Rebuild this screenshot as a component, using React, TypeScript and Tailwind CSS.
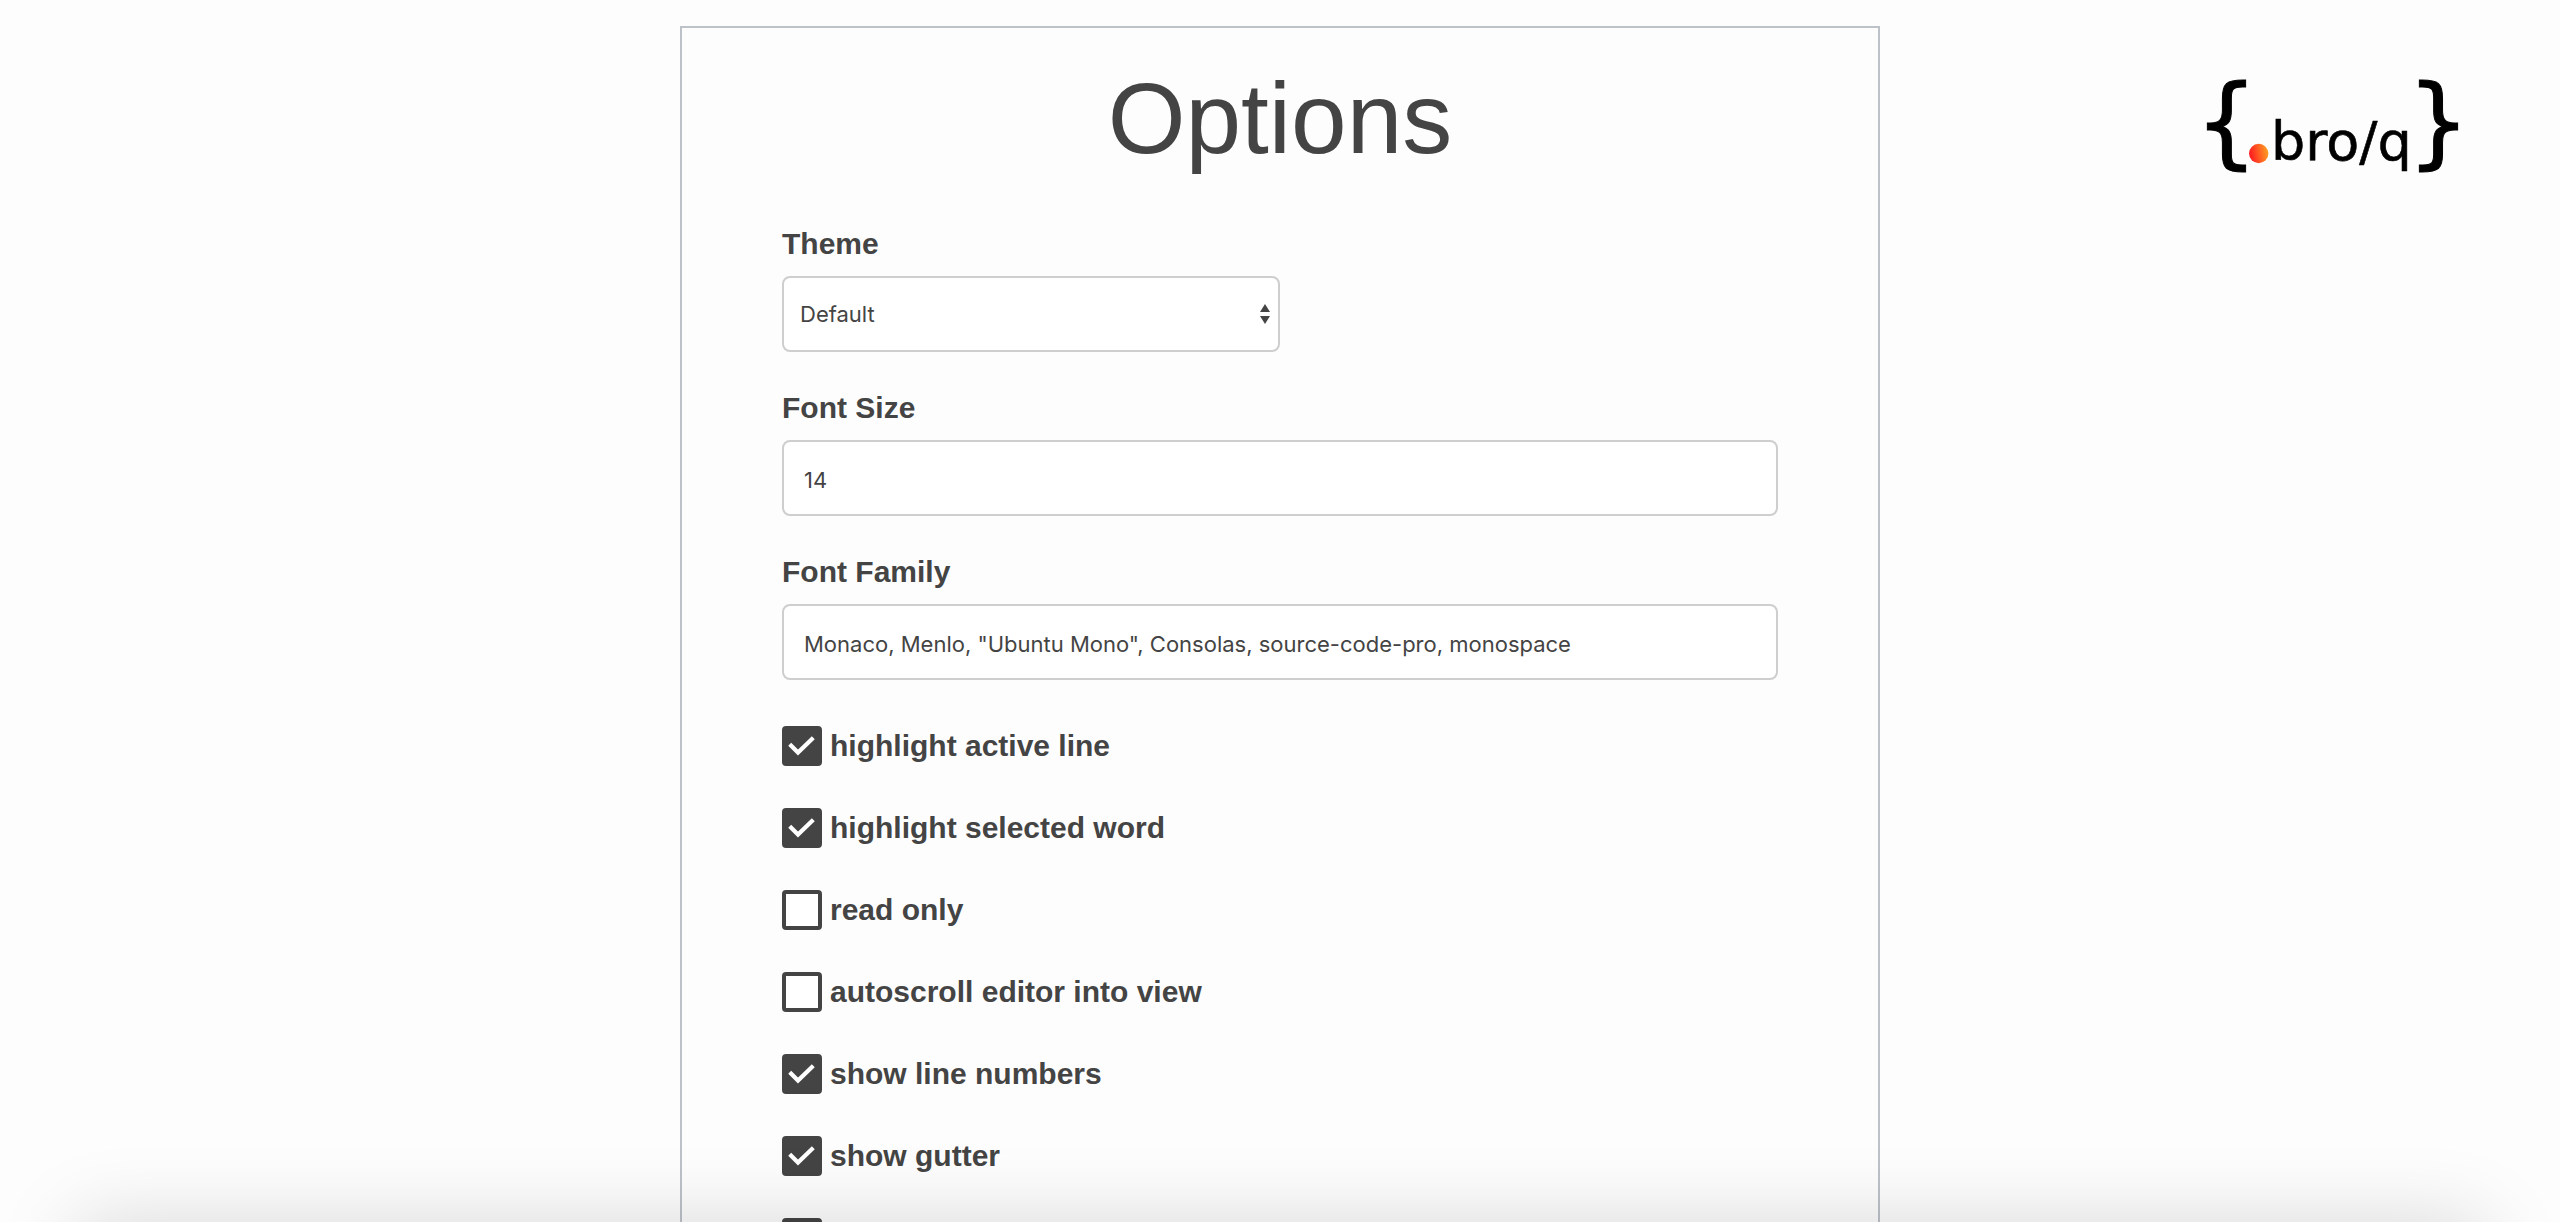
import React from "react";

const checkboxes = [
  { id: "highlight-active-line", label: "highlight active line", checked: true },
  { id: "highlight-selected-word", label: "highlight selected word", checked: true },
  { id: "read-only", label: "read only", checked: false },
  { id: "autoscroll", label: "autoscroll editor into view", checked: false },
  { id: "line-numbers", label: "show line numbers", checked: true },
  { id: "gutter", label: "show gutter", checked: true },
  { id: "next-option", label: "", checked: true },
];

const labelClass =
  "block text-[30px] leading-[48px] font-bold text-[#444444]";
const controlClass =
  "h-[76px] rounded-[8px] border-2 border-[#cecece] bg-white font-['Inter',sans-serif] text-[22px] text-[#444444] outline-none";

function TextField({ id, label, value }: { id: string; label: string; value: string }) {
  return (
    <div>
      <label htmlFor={id} className={labelClass}>{label}</label>
      <input
        id={id}
        type="text"
        defaultValue={value}
        className={`${controlClass} mt-2 block w-full px-5 pt-1`}
      />
    </div>
  );
}

function SelectField() {
  return (
    <div>
      <label htmlFor="theme" className={labelClass}>Theme</label>
      <div className="relative mt-2 w-1/2">
        <select id="theme" className={`${controlClass} block w-full appearance-none pl-4 pr-10`}>
          <option>Default</option>
        </select>
        <svg
          className="pointer-events-none absolute top-7 right-2.5 h-5 w-2.5"
          viewBox="0 0 10 20"
          fill="#444444"
          aria-hidden="true"
        >
          <path d="M5 0L10 8H0ZM0 12H10L5 20Z" />
        </svg>
      </div>
    </div>
  );
}

function CheckField({ id, label, checked }: { id: string; label: string; checked: boolean }) {
  return (
    <div className="flex h-10 items-center gap-2">
      <span className="relative size-10 shrink-0">
        <input
          id={id}
          type="checkbox"
          defaultChecked={checked}
          aria-label={label ? undefined : "option"}
          className="peer block size-10 appearance-none rounded-[4px] border-4 border-[#444444] bg-white checked:bg-[#444444]"
        />
        <svg
          className="pointer-events-none absolute inset-0 hidden size-10 peer-checked:block"
          viewBox="0 0 40 40"
          fill="none"
          stroke="#ffffff"
          strokeWidth="4.2"
          aria-hidden="true"
        >
          <path d="M7.7 18.2L16 26.5L31.3 11.7" />
        </svg>
      </span>
      {label && <label htmlFor={id} className={labelClass}>{label}</label>}
    </div>
  );
}

function Logo() {
  return (
    <svg
      className="h-[150px] w-[300px] blur-[0.6px]"
      viewBox="0 0 300 150"
      role="img"
      aria-label="{.bro/q}"
      fontFamily="'DejaVu Sans', sans-serif"
    >
      <defs>
        <linearGradient id="dot" x1="0" y1="0.6" x2="1" y2="0.4">
          <stop offset="0.1" stopColor="#ff2222" />
          <stop offset="1" stopColor="#ff9f22" />
        </linearGradient>
      </defs>
      <text x="15" y="106" fontSize="99" stroke="#000000" strokeWidth="1">{"{"}</text>
      <circle cx="78.7" cy="103.5" r="9.7" fill="url(#dot)" />
      <text x="91" y="110" fontSize="54" stroke="#000000" strokeWidth="0.6">bro/q</text>
      <text x="227" y="106" fontSize="99" stroke="#000000" strokeWidth="1">{"}"}</text>
    </svg>
  );
}

export default function App() {
  return (
    <div className="relative grid h-screen grid-cols-[1fr_1200px_1fr] overflow-hidden bg-[#fdfdfd] pt-[26px] font-['Liberation_Sans',Arial,sans-serif] text-[#444444]">
      <main className="col-start-2 border-2 border-[#bcc2c8] px-[100px] pt-[30px] pb-10">
        <h1 className="mb-[42px] text-center text-[100px] leading-[120px] font-normal">Options</h1>
        <form>
          <div className="flex flex-col gap-8">
            <SelectField />
            <TextField id="font-size" label="Font Size" value="14" />
            <TextField
              id="font-family"
              label="Font Family"
              value={'Monaco, Menlo, "Ubuntu Mono", Consolas, source-code-pro, monospace'}
            />
          </div>
          <div className="mt-[46px] flex flex-col gap-[42px]">
            {checkboxes.map((box) => (
              <CheckField key={box.id} {...box} />
            ))}
          </div>
        </form>
      </main>
      <aside className="flex items-start justify-end pt-6 pr-20">
        <Logo />
      </aside>
      <div
        className="pointer-events-none absolute inset-x-[75px] top-full h-40 shadow-[0_0_80px_rgba(0,0,0,0.15)]"
        aria-hidden="true"
      />
    </div>
  );
}
